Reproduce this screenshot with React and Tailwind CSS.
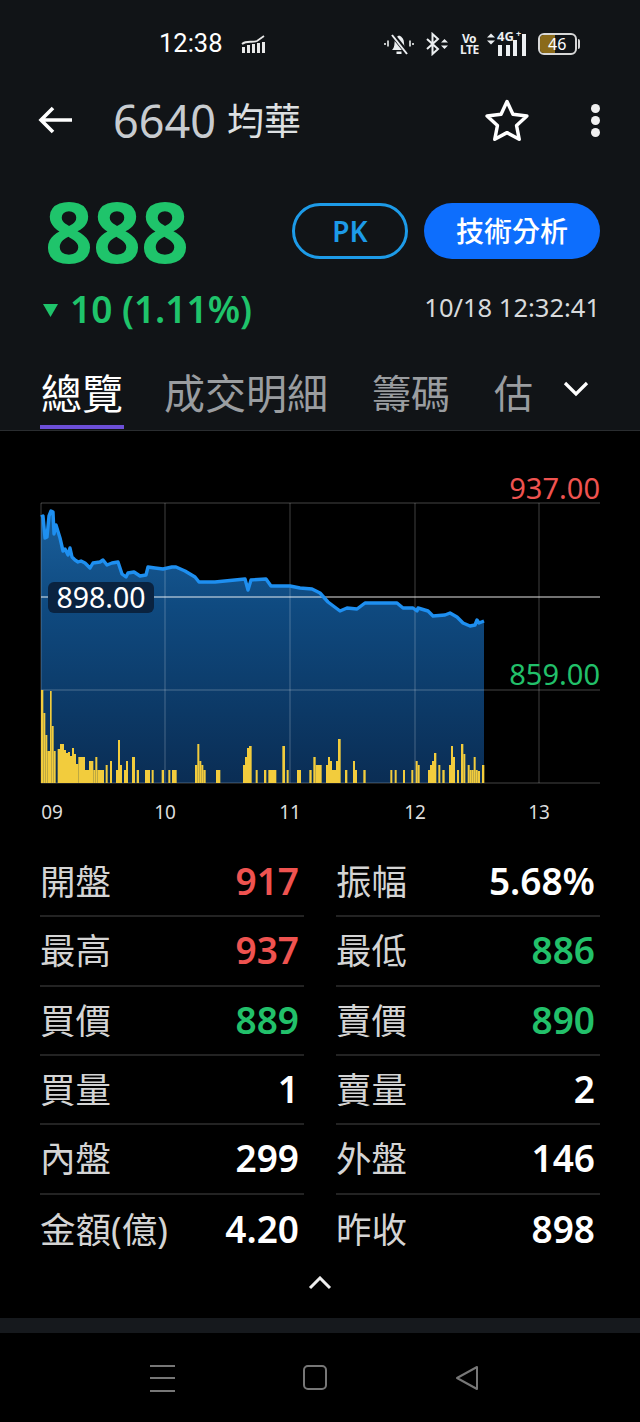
import React from 'react';

const SANS = 'font-["Noto_Sans","Noto_Sans_CJK_TC",sans-serif]';

const LINE = '41,517 43,516 45,538 47,537 49,516 51,511 53,512 54,534 56,525 60,538 63,551 65,549 68,555 70,548 72,557 75,560 78,562 81,561 85,563 90,568 93,563 100,562 103,560 107,565 112,563 118,562 122,574 126,577 128,573 134,572 140,576 146,575 148,567 155,568 163,569 172,567 176,567 185,571 195,577 199,582 215,582 245,579 248,590 251,580 266,579 271,586 290,586 300,588 312,589 320,593 328,602 340,611 347,608 357,609 365,603 397,603 403,608 413,608 417,611 418,608 428,611 433,616 445,615 450,613 457,617 463,623 470,626 475,625 477,620 479,623 484,621';

// volume bars: [x0, x1, height], x in 3x crop units
const VOL_A = [[123,130,93],[130,136,70],[136,142,48],[142,150,32],[150,155,92],[155,161,57],[161,167,32],[173,180,34],[180,192,39],[192,198,33],[198,204,30],[204,210,31],[210,216,27],[216,222,35],[222,228,29],[228,235,19],[235,255,26],[255,267,13],[267,280,22],[280,286,13],[286,292,26],[292,312,13],[317,323,18],[330,336,22],[348,354,13],[354,360,43],[360,366,18],[372,378,13],[378,384,22],[396,405,26],[410,417,13],[435,450,13],[455,461,13],[485,492,13],[505,511,13],[516,530,13],[585,592,18],[592,598,39],[598,604,22],[604,610,18],[610,617,13],[648,661,13],[729,735,18],[735,741,26],[741,747,35],[747,755,37],[767,773,13],[792,799,13],[805,829,13],[847,855,37],[860,866,13],[891,903,13],[928,935,13],[940,947,26],[947,960,18]];
const VOL_B = [[0,5,18],[18,24,18],[24,30,26],[30,36,22],[36,42,13],[42,48,13],[48,54,22],[54,62,44],[75,82,13],[99,105,22],[105,111,13],[130,137,13],[211,217,13],[224,230,13],[249,255,13],[274,280,13],[287,293,22],[293,299,18],[324,330,13],[330,336,18],[336,342,22],[342,349,30],[355,361,18],[367,374,13],[387,393,18],[393,399,37],[399,405,26],[411,417,13],[423,430,39],[430,436,29],[443,449,18],[449,455,13],[455,461,13],[461,467,26],[467,473,13],[473,480,12],[486,493,18]];

const ROWS = [
  [['開盤', '917', 'text-[#ef5350]'], ['振幅', '5.68%', 'text-white']],
  [['最高', '937', 'text-[#ef5350]'], ['最低', '886', 'text-[#22c06a]']],
  [['買價', '889', 'text-[#22c06a]'], ['賣價', '890', 'text-[#22c06a]']],
  [['買量', '1', 'text-white'], ['賣量', '2', 'text-white']],
  [['內盤', '299', 'text-white'], ['外盤', '146', 'text-white']],
  [['金額(億)', '4.20', 'text-white'], ['昨收', '898', 'text-white']],
];

const Chart = () => (
  <svg width="640" height="417" viewBox="0 431 640 417" className="block">
    <defs>
      <linearGradient id="area" x1="0" y1="0" x2="0" y2="1">
        <stop offset="0%" stopColor="#1a5f9b" />
        <stop offset="35%" stopColor="#0f4a80" />
        <stop offset="100%" stopColor="#0a2d54" />
      </linearGradient>
    </defs>
    <polygon points={`${LINE} 484,783 41,783`} fill="url(#area)" />
    {[41, 165, 290, 415, 539].map(x => (
      <line key={x} x1={x} x2={x} y1="503" y2="783" stroke="#fff" strokeOpacity="0.18" strokeWidth="1.4" />
    ))}
    <line x1="41" x2="600" y1="503" y2="503" stroke="#fff" strokeOpacity="0.18" strokeWidth="1.4" />
    <line x1="41" x2="600" y1="690" y2="690" stroke="#fff" strokeOpacity="0.18" strokeWidth="1.4" />
    <line x1="41" x2="600" y1="783" y2="783" stroke="#fff" strokeOpacity="0.18" strokeWidth="1.4" />
    <line x1="41" x2="600" y1="597" y2="597" stroke="#fff" strokeOpacity="0.6" strokeWidth="1.6" />
    {VOL_A.map(([a, b, h]) => (
      <rect key={a} x={a / 3} y={783 - h} width={(b - a) / 3} height={h} fill="#f2cc3d" />
    ))}
    {VOL_B.map(([a, b, h]) => (
      <rect key={a} x={320 + a / 3} y={783 - h} width={(b - a) / 3} height={h} fill="#f2cc3d" />
    ))}
    <polyline points={LINE} fill="none" stroke="#1e8ff0" strokeWidth="3.4" strokeLinejoin="round" />
  </svg>
);

const StatusIcons = () => (
  <div className="flex items-center text-[#eceff1]">
    <svg width="30" height="24" viewBox="0 0 30 24" fill="none" className="mr-[12px]">
      <path d="M8 18c1.500-1.500 2.500-3.500 2.500-7 0-4 2-6.500 4.500-7.500 3 1 5 3.500 5 7.500 0 3.500 1 5.500 3 7z" fill="currentColor" />
      <rect x="12.500" y="19.500" width="5" height="2.500" fill="currentColor" />
      <path d="M8 2l16 20" stroke="#111417" strokeWidth="4.500" />
      <path d="M8 3l15 19" stroke="currentColor" strokeWidth="2" />
      <path d="M1 11v2M4 8.500v6M26 8.500v6M29 11v2" stroke="currentColor" strokeWidth="1.600" />
    </svg>
    <svg width="22" height="24" viewBox="0 0 22 24" fill="none" stroke="currentColor" strokeWidth="2" className="mr-[12px]">
      <path d="M1 7l11 10-5.500 5V2L12 7 1 17" />
      <path d="M15 10.500l3.500-3.500 3.500 3.500zM15 13.500l3.500 3.500 3.500-3.500z" fill="currentColor" stroke="none" />
    </svg>
    <div className="mr-[9px] w-[18px] whitespace-pre-line text-center text-[12px] font-bold leading-[11px] tracking-[-0.5px]">
      {'Vo\nLTE'}
    </div>
    <div className="mr-[11px] flex h-[24px] w-[40px] items-end">
      <div className="relative h-full w-[10px]">
        <svg width="8" height="14" viewBox="0 0 8 14" fill="currentColor"><path d="M0 5.500l4-4 4 4zM0 8.500l4 4 4-4z" /></svg>
      </div>
      <div className="relative h-full flex-1">
        <span className="absolute left-0 top-[-3px] text-[13px] font-bold leading-[14px]">4G</span>
        <span className="absolute left-[19px] top-[-3px] text-[9px] font-bold leading-[10px]">+</span>
        <svg width="30" height="24" viewBox="0 0 30 24" fill="currentColor">
          <rect x="1" y="13" width="4" height="11" />
          <rect x="9" y="13" width="4" height="11" />
          <rect x="16" y="8" width="4" height="16" />
          <rect x="25" y="2" width="4" height="22" />
        </svg>
      </div>
    </div>
    <div className="flex items-center">
      <div className="relative flex h-[22px] w-[39px] items-center overflow-hidden rounded-[6px] border-2 border-[#d8d8d8]">
        <div className="h-full w-[15px] bg-[#8a6a1a]" />
        <span className="absolute left-[8px] top-0 text-[16px] leading-[18px] text-white">46</span>
      </div>
      <div className="ml-[1px] h-[10px] w-[2px] rounded-r bg-[#d8d8d8]" />
    </div>
  </div>
);

export default function App() {
  return (
    <div className={`flex h-[1422px] w-[640px] flex-col overflow-hidden bg-black ${SANS}`}>
      <div className="bg-[#111417]">
        {/* status bar */}
        <div className="flex h-[87px] items-center justify-between pl-[159px] pr-[60px]">
          <div className="flex items-center">
            <span className="font-['Roboto',sans-serif] text-[25.500px] leading-none text-white">12:38</span>
            <svg width="26" height="20" viewBox="0 0 26 20" fill="#e8e8e8" className="ml-[18px]">
              <rect x="1" y="13" width="3" height="6" />
              <rect x="6" y="11" width="3" height="8" />
              <rect x="11" y="10" width="3" height="9" />
              <rect x="16" y="9" width="3" height="10" />
              <rect x="21" y="8" width="3" height="11" />
              <path d="M1 10c5-4 10-1 15-3l7-5" fill="none" stroke="#e8e8e8" strokeWidth="1.800" />
            </svg>
          </div>
          <StatusIcons />
        </div>

        {/* title row */}
        <div className="flex h-[66px] items-center pl-[38px] pr-[40px]">
          <svg width="36" height="30" viewBox="0 0 36 30" fill="none" stroke="#fff" strokeWidth="3.600">
            <path d="M34 15H3M15 3L3 15l12 12" />
          </svg>
          <span className="ml-[39px] text-[45px] leading-none text-[#c8ccd0]">6640</span>
          <span className="ml-[11px] text-[37px] leading-none text-[#dde0e2]">均華</span>
          <svg width="46" height="44" viewBox="0 0 24 23" fill="none" stroke="#fff" strokeWidth="1.800" strokeLinejoin="round" className="ml-auto mr-[61px]">
            <path d="M12 1.800l3.100 6.700 7.300.9-5.400 5 1.400 7.200L12 18.100l-6.400 3.500L7 14.400l-5.400-5 7.300-.9z" />
          </svg>
          <div className="flex flex-col gap-[3px]">
            <span className="size-[9px] rounded-full bg-[#f0f0f0]" />
            <span className="size-[9px] rounded-full bg-[#f0f0f0]" />
            <span className="size-[9px] rounded-full bg-[#f0f0f0]" />
          </div>
        </div>

        {/* quote */}
        <div className="mt-[50px] flex h-[56px] items-center pl-[45px] pr-[40px]">
          <span className="text-[84px] font-bold leading-none text-[#1fc46b]">888</span>
          <div className="ml-auto flex gap-[16px]">
            <div className="flex h-[56px] w-[116px] items-center justify-center rounded-full border-[3px] border-[#1d9be8] text-[28px] font-semibold text-[#1d9be8]">PK</div>
            <div className="flex h-[56px] w-[176px] items-center justify-center rounded-full bg-[#0d6efd] text-[28px] font-medium text-white">技術分析</div>
          </div>
        </div>
        <div className="mt-[29px] flex h-[40px] items-center pl-[43px] pr-[40px]">
          <svg width="15" height="13" viewBox="0 0 15 13" fill="#1fc46b" className="mt-[4px]"><path d="M0 0h15L7.500 13z" /></svg>
          <span className="ml-[12px] text-[37px] font-semibold leading-none text-[#1fc46b]">10 (1.11%)</span>
          <span className="ml-auto text-[25.500px] leading-none text-[#d8dadc]">10/18 12:32:41</span>
        </div>

        {/* tabs */}
        <div className="flex h-[103px] items-start border-b border-[#2a2d30] pl-[40px] pt-[41px] text-[41px] leading-[48px] text-[#9a9da0]">
          <div className="border-b-4 border-[#6c4fd8] px-[1px] pb-[8px] text-white">總覽</div>
          <div className="ml-[40px]">成交明細</div>
          <div className="ml-[44px] text-[39px]">籌碼</div>
          <div className="ml-[44px] text-[39px]">估</div>
          <svg width="26" height="16" viewBox="0 0 26 16" fill="none" stroke="#fff" strokeWidth="3.200" className="ml-[30px] mt-[12px]">
            <path d="M2 2l11 11L24 2" />
          </svg>
        </div>
      </div>

      {/* chart */}
      <div className="relative">
        <Chart />
        <span className="absolute right-[40px] top-[41px] text-[29px] leading-[32px] text-[#ef5350]">937.00</span>
        <span className="absolute right-[40px] top-[227px] text-[29px] leading-[32px] text-[#22c06a]">859.00</span>
        <span className="absolute left-[48px] top-[151px] flex h-[31px] w-[106px] items-center justify-center rounded-[6px] bg-[#0a2340] text-[28.500px] text-white">898.00</span>
        {[['09', 52], ['10', 165], ['11', 290], ['12', 415], ['13', 539]].map(([t, x]) => (
          <span key={t} className="absolute top-[369px] w-[40px] -translate-x-1/2 text-center text-[19px] leading-[24px] text-[#dcdcdc]" style={{ left: x }}>{t}</span>
        ))}
      </div>

      {/* stats table */}
      <div className="grid grid-cols-2 gap-x-[32px] px-[40px]">
        {ROWS.flat().map(([label, value, color], i) => (
          <div key={label} className={`flex h-[69.33px] items-center justify-between ${i < 10 ? 'border-b-2 border-[#232323]' : ''}`}>
            <span className="text-[35.500px] leading-none text-[#d4d4d4]">{label}</span>
            <span className={`pb-[2px] pr-[5px] text-[37px] font-semibold leading-none ${color}`}>{value}</span>
          </div>
        ))}
      </div>

      <div className="flex h-[54px] justify-center pt-[12px]">
        <svg width="24" height="14" viewBox="0 0 24 14" fill="none" stroke="#eee" strokeWidth="3">
          <path d="M2 12L12 2l10 10" />
        </svg>
      </div>
      <div className="h-[15px] bg-[#16191d]" />

      {/* android nav */}
      <div className="flex flex-1 items-start pl-[150px] pt-[32px]">
        <div className="flex h-[27px] w-[25px] flex-col justify-between">
          <span className="h-[2px] bg-[#777]" />
          <span className="h-[2px] bg-[#777]" />
          <span className="h-[2px] bg-[#777]" />
        </div>
        <div className="ml-[128px] h-[25px] w-[24px] rounded-[5px] border-2 border-[#777]" />
        <svg width="24" height="26" viewBox="0 0 24 26" fill="none" stroke="#777" strokeWidth="2" strokeLinejoin="round" className="ml-[128px]">
          <path d="M22 2v22L2 13z" />
        </svg>
      </div>
    </div>
  );
}
